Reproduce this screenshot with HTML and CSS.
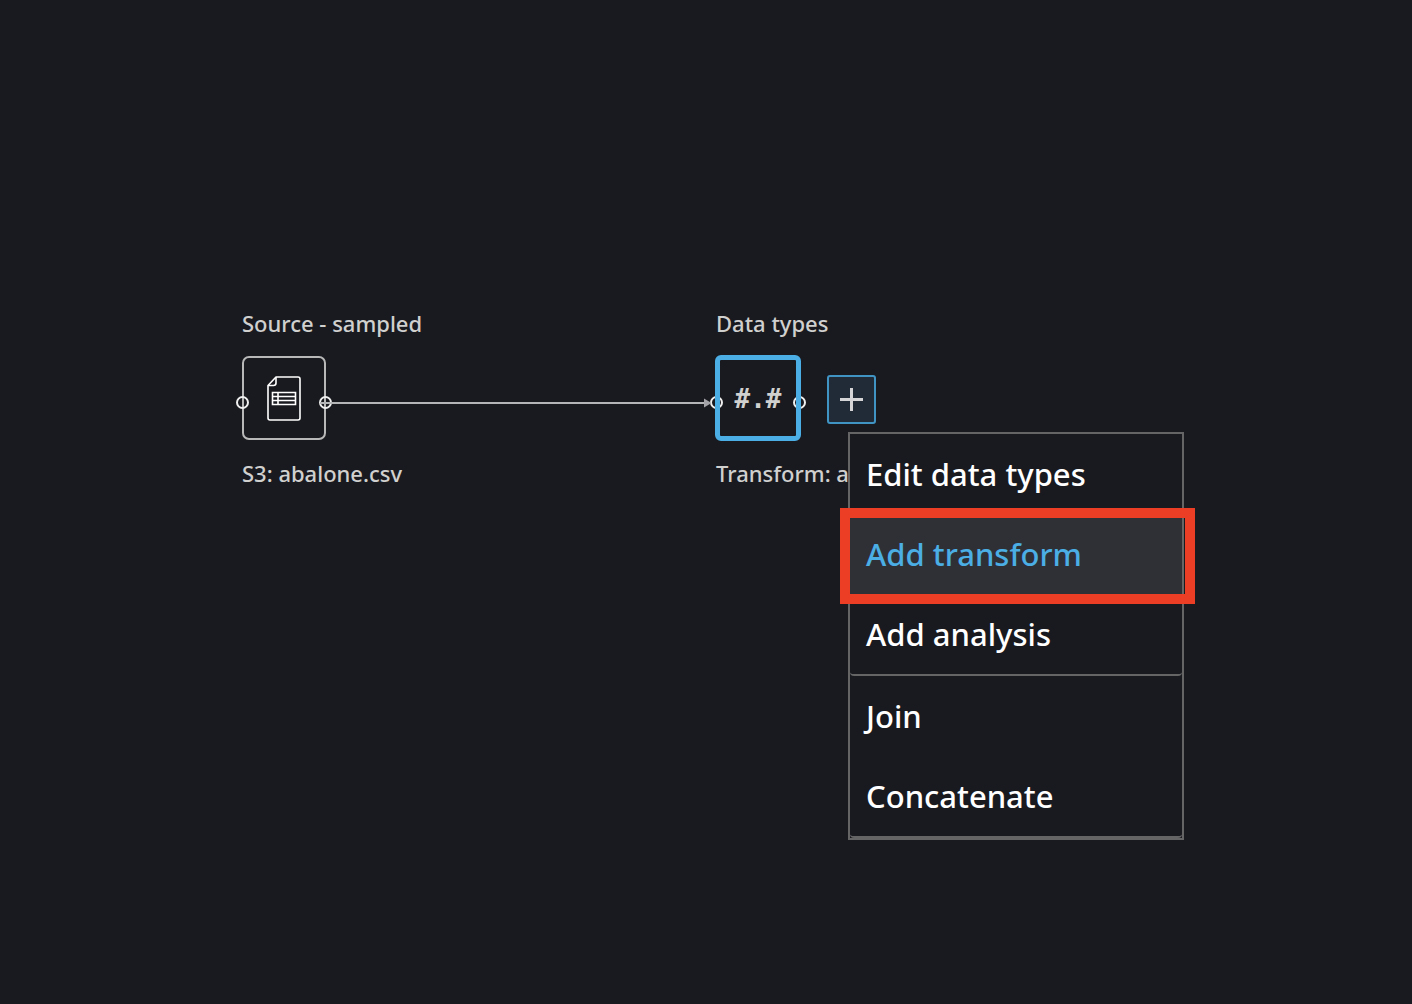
FILE: index.html
```html
<!DOCTYPE html>
<html lang="en">
<head>
<meta charset="utf-8">
<title>Data flow</title>
<link rel="stylesheet" href="styles.css">
</head>
<body>
<main class="canvas">
  <svg class="edge" width="392" height="12" viewBox="0 0 392 12" aria-hidden="true">
    <path d="M0 6H388" stroke="#b4b6b8" stroke-width="2"/>
    <path d="M384 1.500L391.500 6L384 10.500Z" fill="#a3a3a8"/>
  </svg>

  <section class="node node-source">
    <h2 class="node-title">Source - sampled</h2>
    <div class="node-box">
      <svg class="file-icon" width="34" height="46" viewBox="0 0 34 46" fill="none" stroke="#fff" stroke-width="1.6" aria-hidden="true">
        <path d="M9 1H31Q33 1 33 3V42Q33 44 31 44H3Q1 44 1 42V9.500Z" stroke-linejoin="round"/>
        <path d="M9 1V7Q9 9.500 6.500 9.500H1" />
        <path d="M5.500 16.500H28.500V28.500H5.500ZM11 16.500V28.500M5.500 20.500H28.500M5.500 24.500H28.500"/>
      </svg>
      <span class="port port-in"></span>
      <span class="port port-out"></span>
    </div>
    <p class="node-caption">S3: abalone.csv</p>
  </section>

  <section class="node node-types">
    <h2 class="node-title">Data types</h2>
    <div class="node-box selected">
      <span class="type-glyph">#.#</span>
      <span class="port port-in"></span>
      <span class="port port-out"></span>
    </div>
    <p class="node-caption">Transform: a</p>
  </section>

  <button class="add-button" type="button" aria-label="Add step">
    <svg width="23" height="23" viewBox="0 0 23 23" stroke="#d5d5d7" stroke-width="3" aria-hidden="true"><path d="M0 11.500H23M11.500 0V23"/></svg>
  </button>

  <div class="menu">
    <div class="menu-group">
      <button class="menu-item" type="button">Edit data types</button>
      <button class="menu-item active" type="button">Add transform</button>
      <button class="menu-item" type="button">Add analysis</button>
    </div>
    <div class="menu-group">
      <button class="menu-item" type="button">Join</button>
      <button class="menu-item" type="button">Concatenate</button>
    </div>
  </div>
  <div class="callout"></div>
</main>
</body>
</html>
```
FILE: styles.css
```css
* {
  box-sizing: border-box;
}

body {
  margin: 0;
  background: #191a1f;
  color: #d0d0cf;
  font-family: "Noto Sans", "Open Sans", sans-serif;
}

.canvas {
  position: relative;
  min-height: 100vh;
  overflow: hidden;
}

.edge {
  position: absolute;
  left: 320px;
  top: 397px;
  z-index: 1;
}

.node {
  position: absolute;
  top: 307px;
  white-space: nowrap;
}

.node-source {
  left: 242px;
}

.node-types {
  left: 716px;
}

.node-title,
.node-caption {
  margin: 0;
  font-size: 22px;
  line-height: 32px;
  font-weight: 500;
}

.node-box {
  position: relative;
  display: flex;
  align-items: center;
  justify-content: center;
  width: 84px;
  height: 84px;
  margin: 17px 0;
  padding-top: 2px;
  border: 2px solid #b8b8b8;
  border-radius: 7px;
}

.node-box.selected {
  border-color: transparent;
}

.node-box.selected::after {
  content: "";
  position: absolute;
  inset: -3px;
  border: 5px solid #4baee4;
  border-radius: 6px;
}

.port {
  position: absolute;
  top: 38px;
  width: 13px;
  height: 13px;
  border: 2px solid #f0f0f0;
  border-radius: 50%;
}

.port-in {
  left: -8px;
}

.port-out {
  right: -8px;
}

.type-glyph {
  font: bold 26px/32px "DejaVu Sans Mono", monospace;
}

.add-button {
  position: absolute;
  left: 827px;
  top: 375px;
  display: flex;
  align-items: center;
  justify-content: center;
  width: 49px;
  height: 49px;
  padding: 0;
  border: 2px solid #3f94c4;
  border-radius: 3px;
  background: #212a37;
}

.menu {
  position: absolute;
  left: 848px;
  top: 432px;
  width: 336px;
  border: 2px solid #656565;
  background: #191a1f;
}

.menu-group {
  border-bottom: 2px solid #656565;
  border-radius: 0 0 4px 4px;
}

.menu-item {
  display: block;
  width: 100%;
  height: 80px;
  padding: 0 16px;
  border: 0;
  background: transparent;
  color: #fff;
  font: 500 31px/40px "Noto Sans", "Open Sans", sans-serif;
  text-align: left;
}

.menu-item.active {
  background: #2f3036;
  color: #4baee4;
}

.callout {
  position: absolute;
  left: 840px;
  top: 508px;
  width: 355px;
  height: 96px;
  border: 10px solid #eb3e25;
  pointer-events: none;
}
```
